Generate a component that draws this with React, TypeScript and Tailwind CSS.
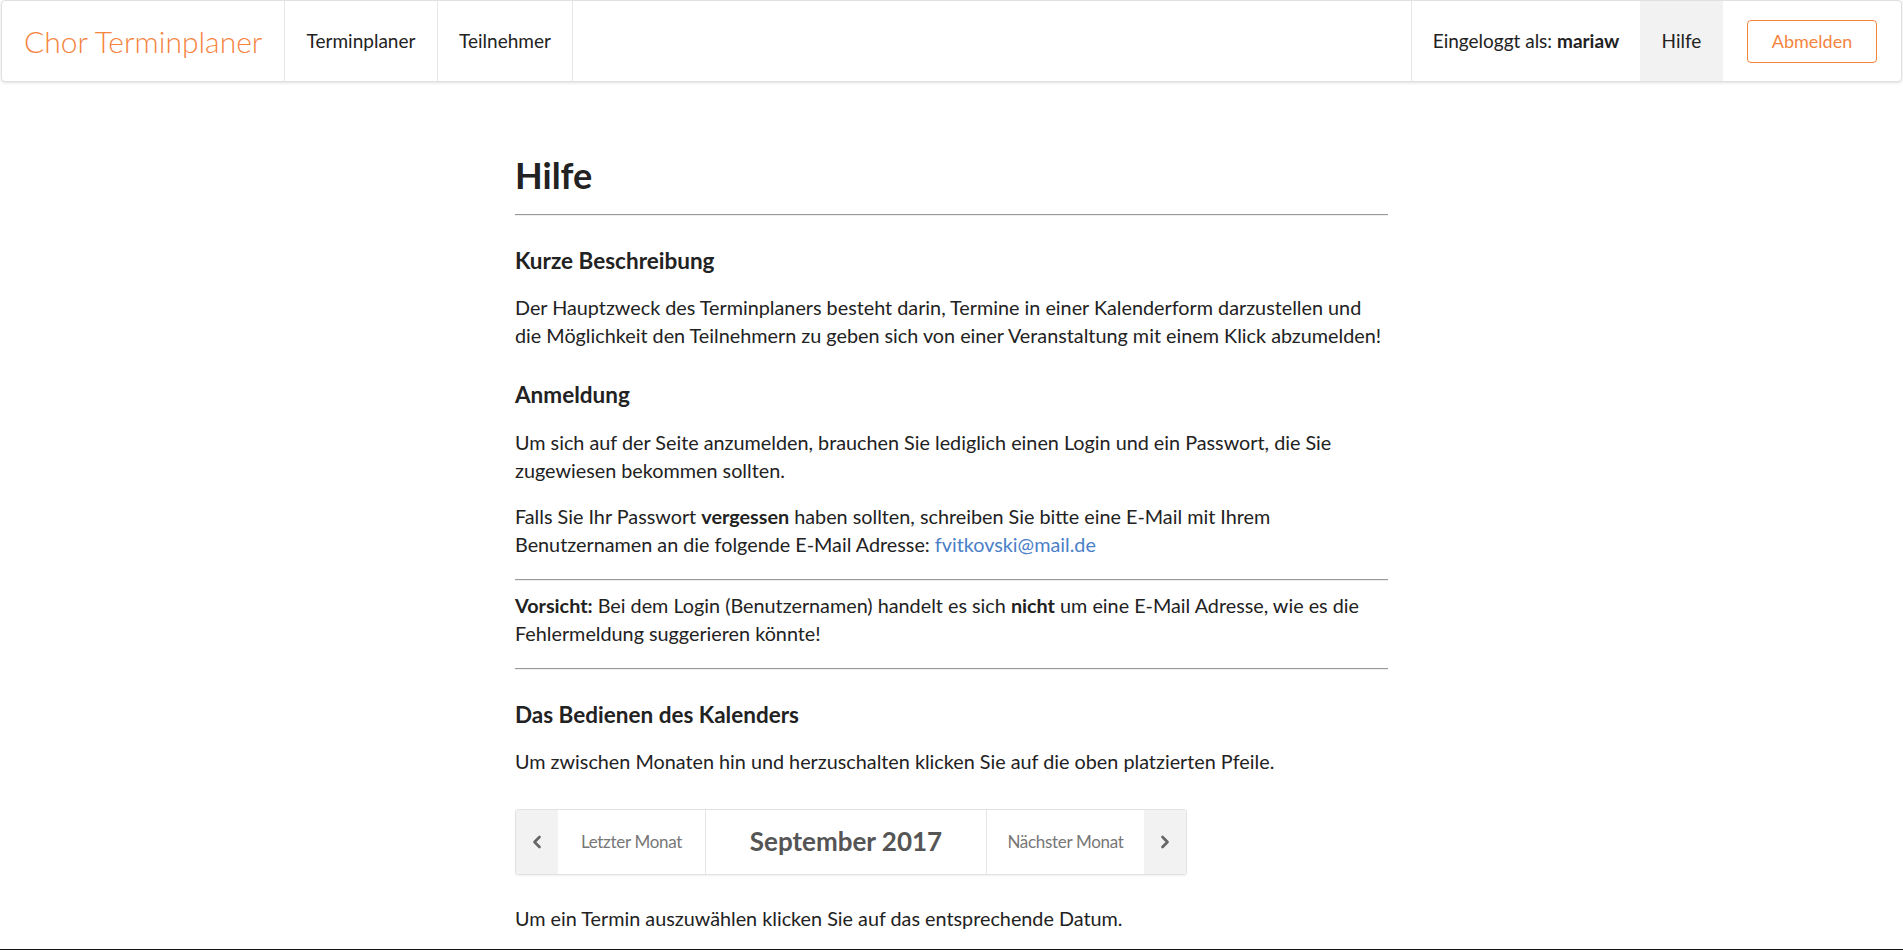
import { ChevronLeft, ChevronRight } from 'lucide-react';

const lato = "font-['Lato',_'Liberation_Sans',_sans-serif]";

function NavBar() {
  return (
    <nav className="mx-px flex h-[82px] items-stretch rounded-[4px] border border-[#e0e0e0] bg-white shadow-[0_1px_3px_rgba(0,0,0,0.12)]">
      <div className="flex w-[283px] items-center border-r border-[#e6e6e6] pl-[22px]">
        <span className="text-[30px] font-light text-[#f5843f]">Chor Terminplaner</span>
      </div>
      <a className="flex w-[153px] items-center justify-center border-r border-[#e6e6e6] text-[19px] text-[#222]">
        Terminplaner
      </a>
      <a className="flex w-[135px] items-center justify-center border-r border-[#e6e6e6] text-[19px] text-[#222]">
        Teilnehmer
      </a>
      <div className="flex-1" />
      <div className="flex w-[229px] items-center justify-center border-l border-[#e6e6e6] text-[19px] text-[#222]">
        Eingeloggt als:&nbsp;<b className="font-bold">mariaw</b>
      </div>
      <a className="flex w-[83px] items-center justify-center bg-[#f2f2f2] text-[19px] text-[#222]">Hilfe</a>
      <div className="flex w-[178px] items-center justify-center">
        <button className="h-[43px] w-[130px] rounded-[4px] border border-[#f5843f] text-[18px] text-[#f5843f]">
          Abmelden
        </button>
      </div>
    </nav>
  );
}

function MonthSwitcher() {
  return (
    <div className="mt-[33px] flex h-[66px] w-[672px] overflow-hidden rounded-[3px] border border-[#e3e3e3] bg-white shadow-[0_1px_2px_rgba(0,0,0,0.06)]">
      <div className="flex w-[42px] items-center justify-center bg-[#f2f2f2] text-[#666]">
        <ChevronLeft size={20} strokeWidth={3.2} />
      </div>
      <div className="flex w-[148px] items-center justify-center border-r border-[#e6e6e6] text-[17px] tracking-[-0.3px] text-[#777]">
        Letzter Monat
      </div>
      <div className="flex w-[281px] items-center justify-center border-r border-[#e6e6e6] text-[26px] font-bold text-[#555]">
        September 2017
      </div>
      <div className="flex flex-1 items-center justify-center text-[17px] tracking-[-0.3px] text-[#777]">
        Nächster Monat
      </div>
      <div className="flex w-[42px] items-center justify-center bg-[#f2f2f2] text-[#666]">
        <ChevronRight size={20} strokeWidth={3.2} />
      </div>
    </div>
  );
}

export default function App() {
  return (
    <div className={`${lato} min-h-screen bg-white text-[#222]`}>
      <NavBar />
      <main className="mx-auto flex w-[873px] flex-col text-[19.8px] leading-[27.5px]">
        <h1 className="mt-[73px] text-[36px] font-bold leading-[40px]">Hilfe</h1>
        <hr className="mt-[19px] border-t border-b border-t-[#9a9a9a] border-b-[#eeeeee]" />
        <h3 className="mt-[33px] text-[22.5px] font-bold leading-[24px]">Kurze Beschreibung</h3>
        <p className="mt-[21px]">
          Der Hauptzweck des Terminplaners besteht darin, Termine in einer Kalenderform darzustellen und die
          Möglichkeit den Teilnehmern zu geben sich von einer Veranstaltung mit einem Klick abzumelden!
        </p>
        <h3 className="mt-[34px] text-[22.5px] font-bold leading-[24px]">Anmeldung</h3>
        <p className="mt-[22px]">
          Um sich auf der Seite anzumelden, brauchen Sie lediglich einen Login und ein Passwort, die Sie zugewiesen
          bekommen sollten.
        </p>
        <p className="mt-[19px]">
          Falls Sie Ihr Passwort <b>vergessen</b> haben sollten, schreiben Sie bitte eine E-Mail mit Ihrem
          Benutzernamen an die folgende E-Mail Adresse: <a className="text-[#4a80c8]">fvitkovski@mail.de</a>
        </p>
        <hr className="mt-[21px] border-t border-b border-t-[#9a9a9a] border-b-[#eeeeee]" />
        <p className="mt-[11px]">
          <b>Vorsicht:</b> Bei dem Login (Benutzernamen) handelt es sich <b>nicht</b> um eine E-Mail Adresse, wie es
          die Fehlermeldung suggerieren könnte!
        </p>
        <hr className="mt-[21px] border-t border-b border-t-[#9a9a9a] border-b-[#eeeeee]" />
        <h3 className="mt-[33px] text-[22.5px] font-bold leading-[24px]">Das Bedienen des Kalenders</h3>
        <p className="mt-[21px]">Um zwischen Monaten hin und herzuschalten klicken Sie auf die oben platzierten Pfeile.</p>
        <MonthSwitcher />
        <p className="mt-[30px]">Um ein Termin auszuwählen klicken Sie auf das entsprechende Datum.</p>
        <div className="mt-[16px] h-[300px]" />
      </main>
      <div className="fixed bottom-0 left-0 h-px w-full bg-[#111]" />
    </div>
  );
}
